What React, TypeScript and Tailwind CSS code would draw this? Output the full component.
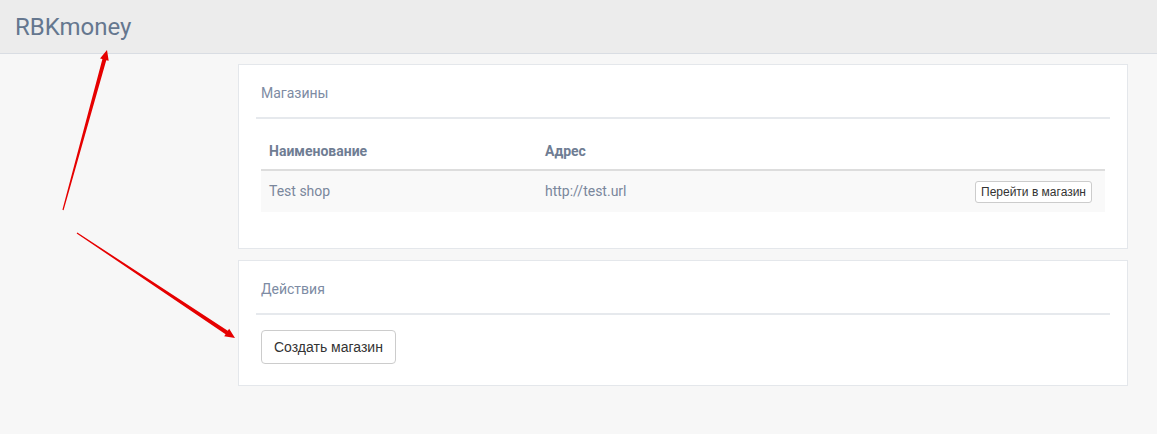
const font = { fontFamily: 'Roboto, "Liberation Sans", Arial, sans-serif' }

export default function App() {
  return (
    <div className="relative min-h-[434px] bg-[#f7f7f7]" style={font}>
      <header className="flex h-[54px] items-center border-b border-[#d9dde3] bg-[#ececec] px-[15px]">
        <span className="text-[24px] leading-none text-[#65778f]">RBKmoney</span>
      </header>

      <main className="flex flex-col gap-[11px] pl-[238px] pr-[29px] pt-[10px]">
        <Card title="Магазины" bottom="pb-[36px]">
          <div className="px-[5px]">
            <table className="w-full border-collapse text-[14px] text-[#7a879c]">
              <thead>
                <tr className="border-b-2 border-[#dddddd]">
                  <th className="h-[51px] w-[276px] px-2 pt-[14px] text-left font-bold text-[#6f7d93]">Наименование</th>
                  <th className="h-[51px] px-2 pt-[14px] text-left font-bold text-[#6f7d93]">Адрес</th>
                  <th className="h-[51px] px-2" />
                </tr>
              </thead>
              <tbody>
                <tr className="h-[42px] bg-[#f9f9f9]">
                  <td className="px-2">Test shop</td>
                  <td className="px-2">http://test.url</td>
                  <td className="px-[13px] text-right">
                    <button
                      type="button"
                      className="h-[22px] rounded-[3px] border border-[#cccccc] bg-white px-[5px] text-[12px] leading-none text-[#333333]"
                      style={{ fontFamily: '"Liberation Sans", Arial, sans-serif' }}
                    >
                      Перейти в магазин
                    </button>
                  </td>
                </tr>
              </tbody>
            </table>
          </div>
        </Card>

        <Card title="Действия" bottom="pb-[21px]">
          <div className="px-[5px] pt-[15px]">
            <button
              type="button"
              className="h-[34px] rounded-[4px] border border-[#cccccc] bg-white px-3 text-[14px] text-[#333333]"
              style={{ fontFamily: '"Liberation Sans", Arial, sans-serif' }}
            >
              Создать магазин
            </button>
          </div>
        </Card>
      </main>

      {/* annotation arrows drawn over the page */}
      <svg className="pointer-events-none absolute left-0 top-0" width="1157" height="434">
        <Arrow x1={63} y1={210} x2={107} y2={50} />
        <Arrow x1={77} y1={233} x2={235} y2={338} />
      </svg>
    </div>
  )
}

function Arrow({ x1, y1, x2, y2 }: { x1: number; y1: number; x2: number; y2: number }) {
  const dx = x2 - x1
  const dy = y2 - y1
  const len = Math.hypot(dx, dy)
  const ux = dx / len
  const uy = dy / len
  const nx = -uy
  const ny = ux
  const headLen = 10
  const headW = 4.5
  const bx = x2 - ux * headLen
  const by = y2 - uy * headLen
  const w0 = 0.6
  const w1 = 2
  const pts = [
    [x1 + nx * w0, y1 + ny * w0],
    [bx + nx * w1, by + ny * w1],
    [bx + nx * headW, by + ny * headW],
    [x2, y2],
    [bx - nx * headW, by - ny * headW],
    [bx - nx * w1, by - ny * w1],
    [x1 - nx * w0, y1 - ny * w0],
  ]
  return <polygon points={pts.map((p) => p.join(',')).join(' ')} fill="#e60000" />
}

function Card({ title, bottom, children }: { title: string; bottom: string; children: React.ReactNode }) {
  return (
    <section className={`border border-[#e4e7eb] bg-white px-[17px] ${bottom}`}>
      <div className="border-b-2 border-[#e6e9ed] px-[5px] pb-[15px] pt-[20px]">
        <h2 className="text-[14px] leading-[17px] text-[#7d8ba3]">{title}</h2>
      </div>
      {children}
    </section>
  )
}
